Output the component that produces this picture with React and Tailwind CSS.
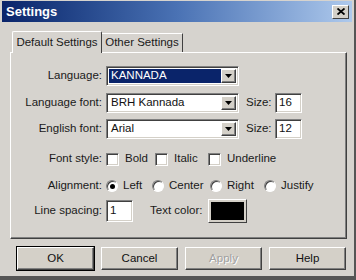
import React from 'react';

const font = { fontFamily: '"Liberation Sans", Arial, sans-serif' };

function Sunken({ className = '', children }) {
  return (
    <div
      className={`border border-t-[#808080] border-l-[#808080] border-b-white border-r-white shadow-[inset_1px_1px_0_#404040,inset_-1px_-1px_0_#d4d0c8] ${className}`}
    >
      {children}
    </div>
  );
}

function Select({ value, selected }) {
  return (
    <Sunken className="w-[133px] h-[20px] bg-white flex items-stretch p-[2px]">
      <div
        className={`flex-1 flex items-center pl-[2px] ${
          selected ? 'bg-[#0a246a] text-white' : 'text-[#111]'
        }`}
      >
        {value}
      </div>
      <div className="w-[15px] bg-[#d4d0c8] border border-t-white border-l-white border-b-[#404040] border-r-[#404040] shadow-[inset_-1px_-1px_0_#808080] flex items-center justify-center">
        <svg width="7" height="4" viewBox="0 0 7 4">
          <path d="M0 0h7L3.5 4z" fill="#000" />
        </svg>
      </div>
    </Sunken>
  );
}

function TextBox({ value, h = 'h-[20px]' }) {
  return (
    <Sunken className={`w-[27px] ${h} bg-white flex items-center pl-[3px] text-[#111]`}>
      {value}
    </Sunken>
  );
}

function Check({ label, w }) {
  return (
    <div className={`flex items-center ${w}`}>
      <Sunken className="w-[13px] h-[13px] bg-white" />
      <span className="ml-[6px]">{label}</span>
    </div>
  );
}

function Radio({ label, checked, w }) {
  return (
    <div className={`flex items-center ${w}`}>
      <div className="w-[12px] h-[12px] rounded-full bg-white border border-t-[#808080] border-l-[#808080] border-b-white border-r-white shadow-[inset_1px_1px_0_#404040] flex items-center justify-center">
        {checked && <div className="w-[5px] h-[5px] rounded-full bg-black" />}
      </div>
      <span className="ml-[5px]">{label}</span>
    </div>
  );
}

function Row({ label, top, h = 'h-[20px]', children }) {
  return (
    <div className={`flex items-center ${h} ${top}`}>
      <div className="w-[92px] text-right pr-[1px]">{label}</div>
      <div className="ml-[3px] flex items-center">{children}</div>
    </div>
  );
}

function Button({ children, isDefault, disabled }) {
  return (
    <div
      className={`w-[77px] h-[23px] flex items-center justify-center bg-[#d4d0c8] ${
        isDefault ? 'outline outline-1 outline-black' : ''
      } border border-t-white border-l-white border-b-[#404040] border-r-[#404040] shadow-[inset_-1px_-1px_0_#808080]`}
    >
      <span className={disabled ? 'text-[#a0a0a0] [text-shadow:1px_1px_0_#fff]' : 'text-[#111]'}>
        {children}
      </span>
    </div>
  );
}

export default function App() {
  return (
    <div
      className="w-[356px] h-[280px] bg-[#d6d3ce] border-r-2 border-b-[4px] border-r-[#555] border-b-[#555] flex flex-col text-[11.5px] text-[#1a1a1a] overflow-hidden"
      style={font}
    >
      {/* title bar */}
      <div className="h-[21px] mt-[1px] mx-[2px] flex items-center justify-between bg-gradient-to-r from-[#0a246a] via-[#4a72b4] to-[#aec9ec] pl-[4px] pr-[3px]">
        <span className="text-white font-bold text-[13px]">Settings</span>
        <div className="w-[17px] h-[14px] bg-[#d4d0c8] border border-t-white border-l-white border-b-[#404040] border-r-[#404040] flex items-center justify-center">
          <svg width="8" height="7" viewBox="0 0 8 7">
            <path d="M0.5 0.5L7.5 6.5M7.5 0.5L0.5 6.5" stroke="#000" strokeWidth="1.8" />
          </svg>
        </div>
      </div>

      {/* tabs */}
      <div className="flex items-end ml-[12px] mt-[8px] h-[22px]">
        <div className="h-[22px] w-[90px] border border-b-0 border-t-white border-l-white border-r-[#404040] rounded-t-[2px] flex items-center justify-center relative z-10 bg-[#d6d3ce] -mb-[1px]">
          Default Settings
        </div>
        <div className="h-[19px] w-[81px] border border-b-0 border-t-white border-l-0 border-r-[#404040] flex items-center justify-center">
          Other Settings
        </div>
      </div>

      {/* panel */}
      <div className="ml-[10px] w-[337px] h-[187px] border border-t-white border-l-white border-b-[#404040] border-r-[#404040] shadow-[inset_-1px_-1px_0_#808080] flex flex-col">
        <Row label="Language:" top="mt-[13px]">
          <Select value="KANNADA" selected />
        </Row>
        <Row label="Language font:" top="mt-[7px]">
          <Select value="BRH Kannada" />
          <span className="ml-[7px] w-[29px]">Size:</span>
          <TextBox value="16" />
        </Row>
        <Row label="English font:" top="mt-[6px]">
          <Select value="Arial" />
          <span className="ml-[7px] w-[29px]">Size:</span>
          <TextBox value="12" />
        </Row>
        <Row label="Font style:" top="mt-[10px]">
          <Check label="Bold" w="w-[49px]" />
          <Check label="Italic" w="w-[53px]" />
          <Check label="Underline" />
        </Row>
        <Row label="Alignment:" top="mt-[7px]">
          <Radio label="Left" checked w="w-[46px]" />
          <Radio label="Center" w="w-[58px]" />
          <Radio label="Right" w="w-[54px]" />
          <Radio label="Justify" />
        </Row>
        <Row label="Line spacing:" h="h-[24px]" top="mt-[3px]">
          <TextBox value="1" h="h-[22px]" />
          <span className="ml-[17px]">Text color:</span>
          <div className="ml-[6px] w-[39px] h-[24px] bg-[#d4d0c8] border border-t-white border-l-white border-b-[#404040] border-r-[#404040] p-[2px]">
            <div className="w-full h-full bg-black" />
          </div>
        </Row>
      </div>

      {/* buttons */}
      <div className="flex gap-[7px] ml-[17px] mt-[8px]">
        <Button isDefault>OK</Button>
        <Button>Cancel</Button>
        <Button disabled>Apply</Button>
        <Button>Help</Button>
      </div>
    </div>
  );
}
